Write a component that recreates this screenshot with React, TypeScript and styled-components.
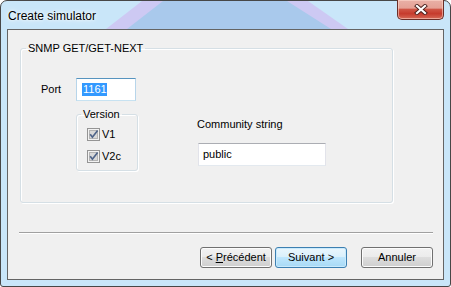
import React from 'react';
import styled, { createGlobalStyle } from 'styled-components';

const GlobalStyle = createGlobalStyle`
  html, body { margin: 0; padding: 0; background: #ffffff; }
  body { font-family: "Liberation Sans", Arial, sans-serif; font-size: 11px; color: #000; }
  * { box-sizing: border-box; }
`;

const Window = styled.div`
  width: 451px;
  height: 287px;
  border: 1px solid #474747;
  border-radius: 7px 7px 3px 3px;
  background: #c9e6f9;
  display: flex;
  flex-direction: column;
  padding: 0 6px 6px;
`;

const TitleBar = styled.div`
  position: relative;
  height: 28px;
  margin: 0 -6px;
  display: flex;
  align-items: flex-start;
  border-radius: 6px 6px 0 0;

  &::before,
  &::after {
    content: '';
    position: absolute;
    inset: 0;
  }
  &::before {
    background: linear-gradient(90deg, #cbe6fa, #cdc9f3 20%, #cdc9f3 80%, #cbe6fa);
    clip-path: polygon(141px 0, 307px 0, 347px 100%, 105px 100%);
  }
  &::after {
    background: #a9c9ec;
    clip-path: polygon(162px 0, 286px 0, 330px 100%, 126px 100%);
  }
`;

const Caption = styled.div`
  position: relative;
  z-index: 1;
  padding: 7px 0 0 7px;
  font-size: 12px;
  line-height: 16px;
  color: #000;
  text-shadow: 0 0 6px #fff, 0 0 3px #fff;
`;

const CloseButton = styled.div`
  position: relative;
  z-index: 1;
  width: 47px;
  height: 20px;
  margin: -1px 6px 0 auto;
  border: 1px solid #6a2e28;
  border-top: none;
  border-radius: 0 0 5px 5px;
  background: linear-gradient(#e9b0a6 0%, #e5a195 42%, #cf5444 50%, #c63b2d 72%, #d66a57 100%);
  box-shadow: inset 0 0 0 1px rgba(255, 220, 210, 0.55);
  display: flex;
  align-items: center;
  justify-content: center;
`;

const Client = styled.div`
  flex: 1;
  border: 1px solid #646464;
  background: #f0f0f0;
  display: flex;
  flex-direction: column;
  padding: 12px 10px 11px 11px;
`;

const Group = styled.fieldset<{ $width: number }>`
  margin: 0 0 0 ${p => (p.$width > 100 ? 1 : 0)}px;
  padding: 0;
  width: ${p => p.$width}px;
  min-inline-size: 0;
  border: 1px solid #d5dfe5;
  border-radius: 3px;
  box-shadow: 1px 1px 0 #fff, inset 1px 1px 0 #fff;
`;

const Legend = styled.legend<{ $offset: number }>`
  margin-left: ${p => p.$offset}px;
  padding: 0 2px;
  font-size: 11px;
  line-height: 13px;
  color: #000;
`;

const GroupBody = styled.div`
  height: 147px;
  display: flex;
  padding: 23px 0 0 20px;
`;

const LeftCol = styled.div`
  display: flex;
  flex-direction: column;
`;

const PortRow = styled.div`
  display: flex;
  align-items: center;
`;

const FieldLabel = styled.span<{ $width?: number }>`
  width: ${p => (p.$width ? `${p.$width}px` : 'auto')};
  line-height: 13px;
`;

const TextField = styled.div<{ $width: number; $focus?: boolean }>`
  width: ${p => p.$width}px;
  height: 23px;
  background: #fff;
  border: 1px solid;
  border-color: ${p =>
    p.$focus ? '#5794bf #b7d5ea #c7e2f1 #b7d5ea' : '#abadb3 #e2e3ea #e3e9ef #e2e3ea'};
  display: flex;
  align-items: center;
  padding-left: ${p => (p.$focus ? 5 : 4)}px;
  line-height: 13px;
  color: #000;
`;

const Selected = styled.span`
  background: #3399ff;
  color: #fff;
  padding: 0 0 0 1px;
`;

const VersionWrap = styled.div`
  margin: 7px 0 0 35px;
`;

const VersionBody = styled.div`
  display: flex;
  flex-direction: column;
  gap: 9px;
  padding: 7px 0 7px 10px;
`;

const CheckRow = styled.label`
  display: flex;
  align-items: center;
  gap: 2px;
  height: 13px;
  line-height: 13px;
`;

const RightCol = styled.div`
  display: flex;
  flex-direction: column;
  margin-left: 59px;
  padding-top: 40px;
  gap: 12px;
`;

const IndentedField = styled.div`
  margin-left: 1px;
`;

const Separator = styled.div`
  margin-top: 29px;
  height: 2px;
  border-top: 1px solid #a0a0a0;
  border-bottom: 1px solid #fff;
`;

const ButtonBar = styled.div`
  display: flex;
  justify-content: flex-end;
  margin-top: 13px;
`;

const Button = styled.div<{ $primary?: boolean; $gap?: number }>`
  width: 72px;
  height: 21px;
  margin-left: ${p => p.$gap ?? 0}px;
  border: 1px solid ${p => (p.$primary ? '#3c7fb1' : '#707070')};
  border-radius: 3px;
  background: ${p =>
    p.$primary
      ? 'linear-gradient(#eaf6fd 0%, #d9f0fc 50%, #bee6fd 50%, #a7d9f5 100%)'
      : 'linear-gradient(#f2f2f2 0%, #ebebeb 50%, #dddddd 50%, #cfcfcf 100%)'};
  box-shadow: inset 0 0 0 1px ${p => (p.$primary ? '#c9eafc' : '#fcfcfc')};
  display: flex;
  align-items: center;
  justify-content: center;
  font-size: 11px;
  line-height: 13px;
  color: #000;
`;

const Mnemonic = styled.span`
  text-decoration: underline;
`;

const CloseGlyph = () => (
  <svg width="14" height="11" viewBox="0 0 14 11">
    <path d="M3 2 L11 9 M11 2 L3 9" stroke="#4a1f1b" strokeWidth="4" strokeLinecap="square" />
    <path d="M3 2 L11 9 M11 2 L3 9" stroke="#ffffff" strokeWidth="2.2" strokeLinecap="square" />
  </svg>
);

const CheckBox = () => (
  <svg width="13" height="13" viewBox="0 0 13 13">
    <rect x="0.5" y="0.5" width="12" height="12" fill="#f2f2f2" stroke="#949494" />
    <rect x="2.5" y="2.5" width="8" height="8" fill="#d9d9d9" stroke="#b4b4b4" />
    <path d="M3.2 6.3 L5.4 9.2 L10.6 2.4" stroke="#4f6489" strokeWidth="1.7" fill="none" />
  </svg>
);

export default function App() {
  return (
    <>
      <GlobalStyle />
      <Window>
        <TitleBar>
          <Caption>Create simulator</Caption>
          <CloseButton>
            <CloseGlyph />
          </CloseButton>
        </TitleBar>
        <Client>
          <Group $width={373}>
            <Legend $offset={5}>SNMP GET/GET-NEXT</Legend>
            <GroupBody>
              <LeftCol>
                <PortRow>
                  <FieldLabel $width={35}>Port</FieldLabel>
                  <TextField $width={60} $focus>
                    <Selected>1161</Selected>
                  </TextField>
                </PortRow>
                <VersionWrap>
                  <Group $width={62}>
                    <Legend $offset={4}>Version</Legend>
                    <VersionBody>
                      <CheckRow>
                        <CheckBox />
                        V1
                      </CheckRow>
                      <CheckRow>
                        <CheckBox />
                        V2c
                      </CheckRow>
                    </VersionBody>
                  </Group>
                </VersionWrap>
              </LeftCol>
              <RightCol>
                <FieldLabel>Community string</FieldLabel>
                <IndentedField>
                  <TextField $width={128}>public</TextField>
                </IndentedField>
              </RightCol>
            </GroupBody>
          </Group>
          <Separator />
          <ButtonBar>
            <Button>
              &lt;&nbsp;<Mnemonic>P</Mnemonic>récédent
            </Button>
            <Button $primary $gap={3}>
              Suivant &gt;
            </Button>
            <Button $gap={14}>Annuler</Button>
          </ButtonBar>
        </Client>
      </Window>
    </>
  );
}
